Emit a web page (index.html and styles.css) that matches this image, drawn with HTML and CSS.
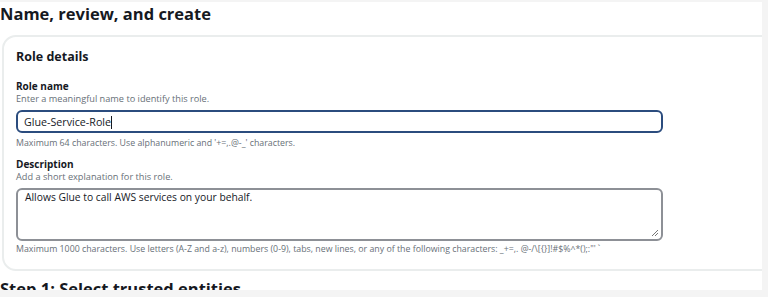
FILE: index.html
```html
<!DOCTYPE html>
<html lang="en">
<head>
  <meta charset="UTF-8">
  <meta name="viewport" content="width=device-width, initial-scale=1">
  <title>Name, review, and create</title>
  <link rel="stylesheet" href="styles.css">
</head>
<body>
  <main class="page">
    <h1 class="page-title">Name, review, and create</h1>

    <section class="card">
      <h2 class="card-title">Role details</h2>

      <div class="field">
        <label class="field-label" for="roleName">Role name</label>
        <div class="field-desc">Enter a meaningful name to identify this role.</div>
        <div class="input" id="roleName">Glue-Service-Role<span class="caret"></span></div>
        <div class="field-hint">Maximum 64 characters. Use alphanumeric and '+=,.@-_' characters.</div>
      </div>

      <div class="field">
        <label class="field-label" for="roleDesc">Description</label>
        <div class="field-desc">Add a short explanation for this role.</div>
        <div class="textarea" id="roleDesc">
          Allows Glue to call AWS services on your behalf.
          <svg class="grip" width="8" height="8" viewBox="0 0 8 8">
            <path d="M7 1 L1 7 M7 4 L4 7" stroke="#777" stroke-width="1" fill="none"/>
          </svg>
        </div>
        <div class="field-hint tight">Maximum 1000 characters. Use letters (A-Z and a-z), numbers (0-9), tabs, new lines, or any of the following characters: _+=,. @-/\[{}]!#$%^*();:"' `</div>
      </div>
    </section>

    <h2 class="step-title">Step 1: Select trusted entities</h2>
  </main>
</body>
</html>
```

FILE: styles.css
```css
body {
  margin: 0;
  background-color: #f4f4f4;
  font-family: 'Open Sans', sans-serif;
  color: #16191f;
}

.page {
  background-color: #fff;
  margin: 2px 6px 0 0;
  height: 288px;
  overflow: hidden;
}

.page-title {
  margin: 0;
  font-size: 16.5px;
  line-height: 24px;
  font-weight: 700;
}

.card {
  margin: 9px -30px 0 2px;
  border: 2px solid #eaeded;
  border-radius: 14px;
  padding: 12px 12px 14px;
}

.card-title {
  margin: 0 0 15px;
  font-size: 12.5px;
  line-height: 16px;
  font-weight: 700;
}

.field {
  width: 647px;
  margin-bottom: 9px;
}

.field:last-child {
  margin-bottom: 0;
}

.field-label {
  display: block;
  font-size: 10px;
  line-height: 13px;
  font-weight: 700;
}

.field-desc {
  font-size: 9.2px;
  line-height: 12px;
  color: #687078;
  margin-bottom: 5px;
}

.input {
  height: 19px;
  border: 2px solid #2b4c7e;
  border-radius: 6px;
  padding: 0 6px;
  font-size: 10.7px;
  line-height: 20px;
}

.caret {
  display: inline-block;
  width: 1px;
  height: 13px;
  background: #16191f;
  vertical-align: -3px;
}

.textarea {
  position: relative;
  height: 49px;
  border: 2px solid #8d9096;
  border-radius: 6px;
  padding: 0 7px;
  font-size: 10.3px;
  line-height: 14px;
}

.grip {
  position: absolute;
  right: 2px;
  bottom: 2px;
}

.field-hint {
  margin-top: 4px;
  font-size: 8.8px;
  line-height: 12px;
  color: #687078;
  white-space: nowrap;
}

.field-hint.tight {
  margin-top: 2px;
}

.step-title {
  margin: 6px 0 0;
  font-size: 16.5px;
  line-height: 24px;
  font-weight: 700;
}
```
